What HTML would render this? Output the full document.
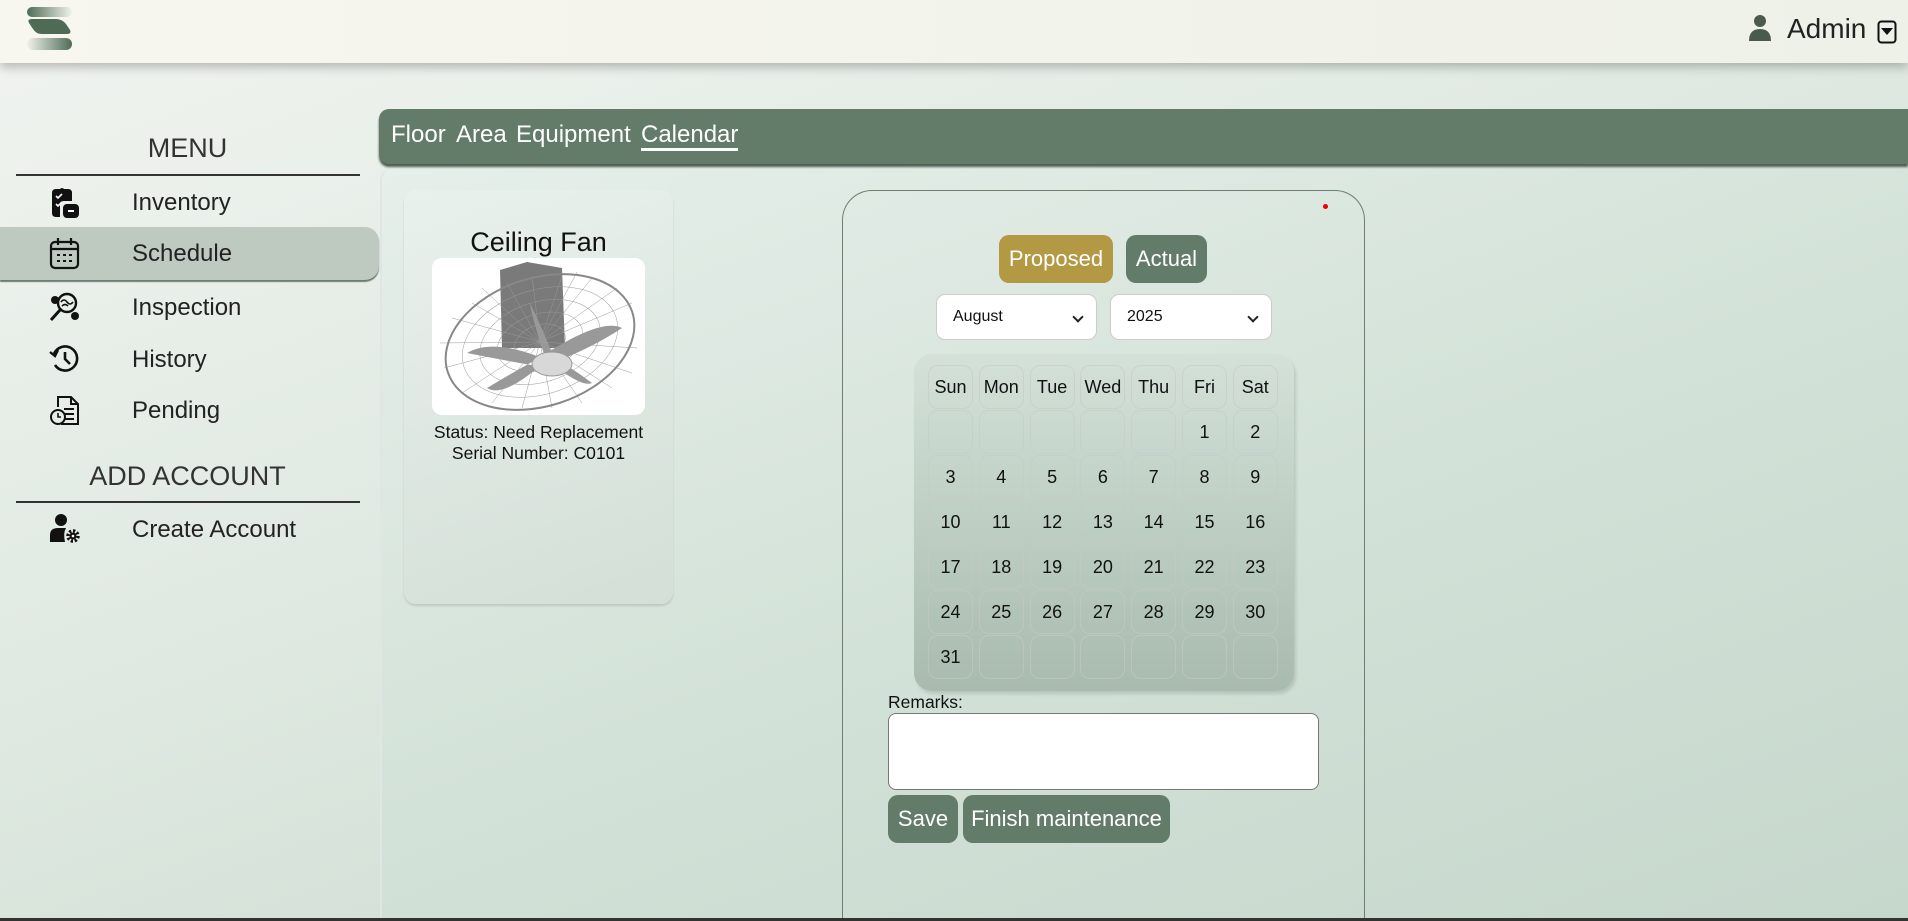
<!DOCTYPE html>
<html style="overflow:hidden;width:1908px;height:921px"><head><meta charset="utf-8"><style>
*{box-sizing:border-box;margin:0;padding:0}
body{width:1908px;height:921px;overflow:hidden;position:relative;font-family:"Liberation Sans",sans-serif;background:linear-gradient(160deg,#f1f4f0 0%,#dfe9e1 45%,#c6d6cb 100%);color:#111}
.hdr{position:absolute;left:0;top:0;width:1908px;height:63px;background:linear-gradient(90deg,#f7f6ef,#eef1e8);box-shadow:0 4px 10px rgba(0,0,0,.25);z-index:5}
.abs{position:absolute}
.side{font-size:24px;color:#222}
.main{position:absolute;left:380px;top:167px;width:1528px;height:751px;background:linear-gradient(160deg,#e6efea,#d3e2d8 50%,#c6d7cc);border-left:2px solid #e0e7e2;border-radius:14px 0 0 0}
.nav{position:absolute;left:379px;top:109px;width:1529px;height:55px;background:#637b69;border-radius:10px 0 0 10px;box-shadow:0 3px 2px #4d5f51;color:#fff;font-size:24px}
.nav span{position:absolute;top:12px}
.card{position:absolute;left:404px;top:190px;width:269px;height:414px;border-radius:12px;background:linear-gradient(160deg,#e9f1ec,#d3dfd7);box-shadow:0 2px 2px rgba(0,0,0,.12)}
.cal{position:absolute;left:842px;top:190px;width:523px;height:728px;border:1.5px solid #6b806f;border-bottom:none;border-radius:30px 30px 0 0}
.btn{position:absolute;color:#fff;border-radius:10px;font-size:22px;display:flex;align-items:center;justify-content:center}
.sel{position:absolute;background:#fff;border:1px solid #ccc;border-radius:9px;font-size:16px;padding-left:16px;display:flex;align-items:center}
.sel:after{content:"";position:absolute;right:14px;top:18px;width:6px;height:6px;border-right:2px solid #222;border-bottom:2px solid #222;transform:rotate(45deg)}
.grid{position:absolute;left:914px;top:354px;width:380px;height:337px;border-radius:18px;background:linear-gradient(180deg,#d4e1d8,#c2d2c7 40%,#a8bbae);box-shadow:2px 3px 3px rgba(0,0,0,.12)}
.c{position:absolute;width:45px;height:44px;border:1px solid rgba(200,200,200,.6);border-radius:10px;display:flex;align-items:center;justify-content:center;font-size:18px;color:#111}
</style></head><body>
<div class="hdr">
 <svg class="abs" style="left:26px;top:6px" width="48" height="46" viewBox="0 0 48 46"><defs><linearGradient id="g" x1="0" x2="1"><stop offset="0" stop-color="#4f6b55"/><stop offset="1" stop-color="#f0f2ec"/></linearGradient><linearGradient id="g2" x1="1" x2="0"><stop offset="0" stop-color="#4f6b55"/><stop offset="1" stop-color="#f0f2ec"/></linearGradient></defs>
 <rect x="1" y="1" width="45" height="10" rx="5" fill="url(#g)"/><path d="M6 13 L30 13 Q36 13 40 18 L44 24 Q46 28 40 28 L16 28 Q10 28 7 23 L3 17 Q1 13 6 13 Z" fill="#4f6b55"/><rect x="1" y="32" width="45" height="12" rx="6" fill="url(#g2)"/></svg>
 <svg class="abs" style="left:1748px;top:14px" width="24" height="28" viewBox="0 0 24 28"><circle cx="12" cy="7" r="6" fill="#4a5a4e"/><path d="M1 27 Q1 15 12 15 Q23 15 23 27 Z" fill="#4a5a4e"/></svg>
 <div class="abs" style="left:1787px;top:13px;font-size:28px;color:#222">Admin</div>
 <svg class="abs" style="left:1877px;top:20px" width="20" height="24" viewBox="0 0 20 24"><rect x="1.5" y="1.5" width="17" height="21" rx="3" fill="none" stroke="#111" stroke-width="2"/><path d="M4 8 L16 8 L10 15 Z" fill="#111"/></svg>
</div>

<div class="abs side" style="left:0;top:133px;width:375px;text-align:center;font-size:27px;color:#333">MENU</div>
<div class="abs" style="left:16px;top:174px;width:344px;height:1.5px;background:#333"></div>
<div class="abs" style="left:0;top:227px;width:379px;height:53px;background:#bec9c0;border-radius:0 14px 14px 0;box-shadow:0 2px 1px #6b7f70"></div>
<svg class="abs" style="left:50px;top:187px" width="30" height="32" viewBox="0 0 30 32"><path d="M2 6 Q2 2 6 2 L10 2 Q12 0 14 2 L18 2 Q22 2 22 6 L22 14 L14 14 Q10 14 10 18 L10 30 L6 30 Q2 30 2 26 Z" fill="#111"/><path d="M6 9 L8 11 L12 7 M6 17 L8 19 L12 15" stroke="#fff" stroke-width="1.6" fill="none"/><rect x="13" y="17" width="16" height="14" rx="4" fill="#111"/><rect x="18" y="23" width="6" height="2" fill="#fff"/></svg>
<svg class="abs" style="left:49px;top:237px" width="31" height="33" viewBox="0 0 31 33"><rect x="2" y="5" width="27" height="26" rx="4" fill="none" stroke="#111" stroke-width="2.2"/><path d="M2 12 L29 12 M9 1 L9 8 M22 1 L22 8" stroke="#111" stroke-width="2.2"/><path d="M8 18h3M14 18h3M20 18h3M8 24h3M14 24h3M20 24h3" stroke="#111" stroke-width="2"/></svg>
<svg class="abs" style="left:49px;top:292px" width="32" height="30" viewBox="0 0 32 30"><circle cx="18" cy="11" r="9" fill="none" stroke="#111" stroke-width="2.4"/><path d="M12 10 Q15 6 18 10 T24 10 M13 14 Q16 11 19 14" stroke="#111" stroke-width="1.6" fill="none"/><circle cx="6" cy="8" r="4" fill="#111"/><circle cx="26" cy="24" r="4" fill="#111"/><path d="M11 18 L2 28" stroke="#111" stroke-width="3"/></svg>
<svg class="abs" style="left:49px;top:344px" width="31" height="30" viewBox="0 0 31 30"><path d="M5 10 A12 12 0 1 1 6 21" fill="none" stroke="#111" stroke-width="2.6"/><path d="M1 8 L6 12 L9 6" fill="none" stroke="#111" stroke-width="2.4"/><path d="M16 8 L16 15 L21 20" fill="none" stroke="#111" stroke-width="2.6"/></svg>
<svg class="abs" style="left:49px;top:395px" width="31" height="30" viewBox="0 0 31 30"><path d="M9 12 L9 2 L22 2 L29 9 L29 29 L12 29" fill="none" stroke="#111" stroke-width="2"/><path d="M22 2 L22 9 L29 9 M15 14h10M15 19h10M15 24h10" stroke="#111" stroke-width="2" fill="none"/><circle cx="9" cy="22" r="7" fill="none" stroke="#111" stroke-width="2"/><path d="M9 18 L9 22 L12 22" stroke="#111" stroke-width="1.6" fill="none"/></svg>
<svg class="abs" style="left:49px;top:513px" width="32" height="30" viewBox="0 0 32 30"><circle cx="12" cy="7" r="6" fill="#111"/><path d="M1 29 L1 22 Q1 15 9 15 L17 15 Q14 20 16 29 Z" fill="#111"/><circle cx="24" cy="23" r="5" fill="none" stroke="#111" stroke-width="3.5" stroke-dasharray="2.2 1.7"/><circle cx="24" cy="23" r="3.5" fill="#111"/><circle cx="24" cy="23" r="1.3" fill="#fff"/></svg>
<div class="abs side" style="left:132px;top:189px">Inventory</div>
<div class="abs side" style="left:132px;top:240px">Schedule</div>
<div class="abs side" style="left:132px;top:294px">Inspection</div>
<div class="abs side" style="left:132px;top:346px">History</div>
<div class="abs side" style="left:132px;top:397px">Pending</div>
<div class="abs side" style="left:0;top:461px;width:375px;text-align:center;font-size:27px;color:#333">ADD ACCOUNT</div>
<div class="abs" style="left:16px;top:501px;width:344px;height:1.5px;background:#333"></div>
<div class="abs side" style="left:132px;top:516px">Create Account</div>

<div class="main"></div>
<div class="nav"><span style="left:12px">Floor</span><span style="left:77px">Area</span><span style="left:137px">Equipment</span><span style="left:262px;border-bottom:3px solid #fff;line-height:27px">Calendar</span></div>

<div class="card">
 <div class="abs" style="left:0;top:37px;width:269px;text-align:center;font-size:27px">Ceiling Fan</div>
 <div class="abs" style="left:28px;top:68px;width:213px;height:157px;background:#fff;border-radius:10px;overflow:hidden">
  <svg width="213" height="157" viewBox="0 0 213 157">
   <path d="M68 12 L95 4 L130 10 L133 90 L70 90 Z" fill="#7a7a7a"/>
   <g stroke="#999" stroke-width=".5" fill="none">
    <ellipse cx="108" cy="84" rx="80" ry="52" transform="rotate(-18 108 84)"/>
    <ellipse cx="108" cy="84" rx="62" ry="40" transform="rotate(-18 108 84)"/>
    <ellipse cx="108" cy="84" rx="44" ry="28" transform="rotate(-18 108 84)"/>
    <ellipse cx="108" cy="84" rx="26" ry="17" transform="rotate(-18 108 84)"/>
    <path d="M108 84L12 110M108 84L20 60M108 84L50 30M108 84L100 18M108 84L160 20M108 84L200 45M108 84L205 90M108 84L180 130M108 84L120 150M108 84L60 145M108 84L30 135M108 84L75 25M108 84L130 18M108 84L185 30M108 84L150 145M108 84L40 45M108 84L90 150M108 84L200 115M108 84L8 85M108 84L145 14"/>
   </g>
   <ellipse cx="108" cy="84" rx="97" ry="64" transform="rotate(-18 108 84)" fill="none" stroke="#888" stroke-width="2"/>
   <path d="M110 100 Q60 80 35 95 Q70 102 105 108Z M115 95 Q170 60 190 70 Q160 90 120 105Z M108 108 Q70 140 55 130 Q80 115 100 104Z M118 104 Q150 130 160 125 Q140 110 122 100Z M112 96 Q100 60 98 45 Q110 70 120 95Z" fill="#999"/>
   <ellipse cx="120" cy="106" rx="20" ry="12" fill="#d8d8d8" stroke="#999"/>
  </svg>
 </div>
 <div class="abs" style="left:0;top:232px;width:269px;text-align:center;font-size:17.5px;line-height:21px">Status: Need Replacement<br>Serial Number: C0101</div>
</div>

<div class="cal"></div>
<div class="abs" style="left:1323px;top:204px;width:5px;height:5px;border-radius:50%;background:#e00"></div>
<div class="btn" style="left:999px;top:235px;width:114px;height:48px;background:#b39943">Proposed</div>
<div class="btn" style="left:1126px;top:235px;width:81px;height:48px;background:#637b69">Actual</div>
<div class="sel" style="left:936px;top:294px;width:161px;height:46px">August</div>
<div class="sel" style="left:1110px;top:294px;width:162px;height:46px">2025</div>
<div class="grid"></div>
<div id="cells"></div>
<div class="abs" style="left:888px;top:692px;font-size:17.5px">Remarks:</div>
<div class="abs" style="left:888px;top:713px;width:431px;height:77px;background:#fff;border:1px solid #777;border-radius:8px"></div>
<div class="btn" style="left:888px;top:795px;width:70px;height:48px;background:#637b69">Save</div>
<div class="btn" style="left:963px;top:795px;width:207px;height:48px;background:#637b69">Finish maintenance</div>
<div class="abs" style="left:0;top:918px;width:1908px;height:3px;background:#333"></div>
<script>
var h='',d=['Sun','Mon','Tue','Wed','Thu','Fri','Sat'];
for(var r=0;r<7;r++)for(var c=0;c<7;c++){var t='';if(r==0)t=d[c];else{var n=(r-1)*7+c-4;if(n>=1&&n<=31)t=n;}
h+='<div class="c" style="left:'+(928+c*50.8)+'px;top:'+(365+r*45)+'px">'+t+'</div>';}
document.getElementById('cells').innerHTML=h;
</script>
</body></html>
